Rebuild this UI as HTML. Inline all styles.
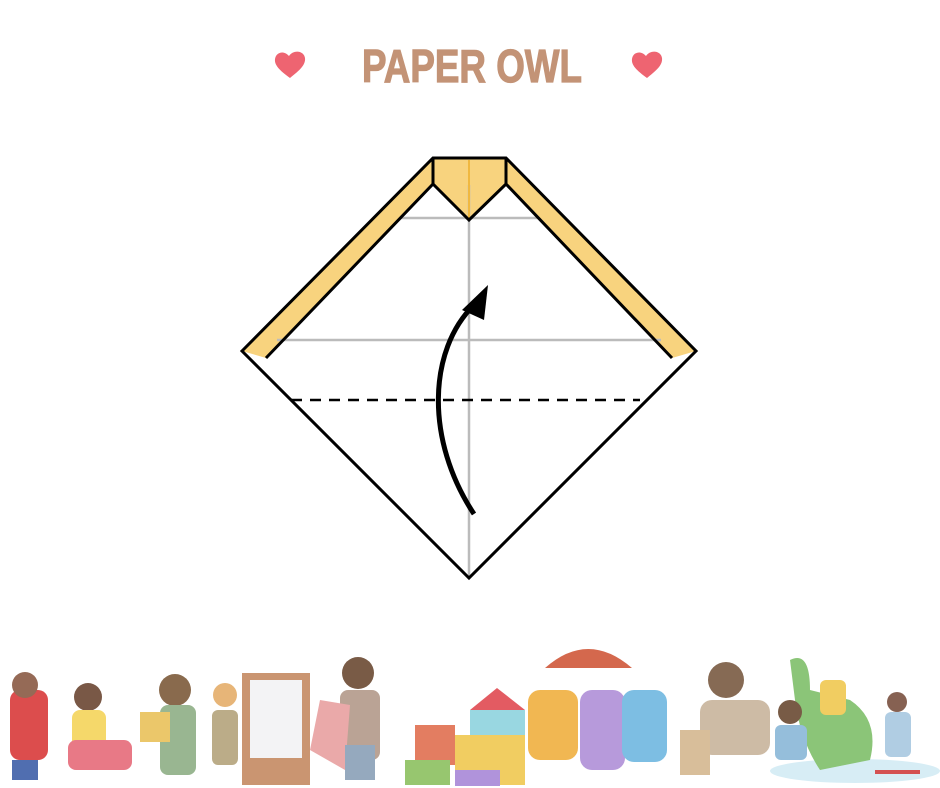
<!DOCTYPE html>
<html><head><meta charset="utf-8"><style>
html,body{margin:0;padding:0;background:#fff;width:940px;height:788px;overflow:hidden}
svg{display:block}
</style></head><body>
<svg width="940" height="788" viewBox="0 0 940 788" xmlns="http://www.w3.org/2000/svg">
<path d="M290 78 C282 72 274 66 275 59 C276 52 284 50 289 56 C294 49 304 51 305 58 C306 66 297 72 290 78Z" fill="#ee6471"/>
<path d="M647 78 C639 72 631 66 632 59 C633 52 641 50 646 56 C651 49 661 51 662 58 C663 66 654 72 647 78Z" fill="#ee6471"/>
<text x="362" y="82" textLength="220" lengthAdjust="spacingAndGlyphs" font-family="Liberation Sans, sans-serif" font-weight="bold" font-size="46" fill="#c39376" stroke="#c39376" stroke-width="1.2">PAPER OWL</text>

<polygon points="242,351 433,158 506,158 696,351 469,578" fill="#fff"/>
<polygon points="242,351 433,158 506,158 696,351 672,358 506,184 469,220 433,184 266,358" fill="#f8d37e"/>
<g stroke="#bbb" stroke-width="2.5" fill="none">
<line x1="469" y1="185" x2="469" y2="578"/>
<line x1="400" y1="218" x2="538" y2="218"/>
<line x1="277" y1="340" x2="661" y2="340"/>
</g>
<line x1="469" y1="160" x2="469" y2="218" stroke="#f0b840" stroke-width="2"/>
<g stroke="#000" stroke-width="3" fill="none" stroke-linejoin="miter">
<polyline points="266,358 433,184 469,220 506,184 672,358"/>
<line x1="433" y1="158" x2="433" y2="184"/>
<line x1="506" y1="158" x2="506" y2="184"/>
<polygon points="242,351 433,158 506,158 696,351 469,578"/>
<line x1="291" y1="400" x2="640" y2="400" stroke-dasharray="11,8" stroke-width="2.5"/>
<path d="M474 514 C 425 440 428 350 474 305" stroke-width="5"/>
</g>
<polygon points="462,310 488,285 484,320" fill="#000"/>

<g opacity="0.9">
<ellipse cx="855" cy="771" rx="85" ry="12" fill="#d3ecf5"/>
<rect x="10" y="690" width="38" height="70" rx="10" fill="#d93a3a"/>
<circle cx="25" cy="685" r="13" fill="#8a5a44"/>
<rect x="12" y="760" width="26" height="20" fill="#3e5fa8"/>
<circle cx="88" cy="697" r="14" fill="#6b4632"/>
<rect x="72" y="710" width="34" height="55" rx="8" fill="#f4d45a"/>
<rect x="68" y="740" width="64" height="30" rx="8" fill="#e66b7a"/>
<circle cx="175" cy="690" r="16" fill="#7d5a3a"/>
<rect x="160" y="705" width="36" height="70" rx="8" fill="#8faf86"/>
<rect x="140" y="712" width="30" height="30" fill="#e9c25a"/>
<circle cx="225" cy="695" r="12" fill="#e5ae6a"/>
<rect x="212" y="710" width="26" height="55" rx="6" fill="#b4a47c"/>
<rect x="242" y="673" width="68" height="112" fill="#c58a62"/>
<rect x="250" y="680" width="52" height="78" fill="#f2f2f4"/>
<circle cx="358" cy="673" r="16" fill="#6b4a33"/>
<rect x="340" y="690" width="40" height="70" rx="8" fill="#b39a8a"/>
<path d="M320 700 L350 705 L345 770 L310 750 Z" fill="#e8a0a0"/>
<rect x="345" y="745" width="30" height="35" fill="#8aa0b8"/>
<polygon points="470,710 497,688 525,710" fill="#e04a52"/>
<rect x="470" y="710" width="55" height="25" fill="#8fd3de"/>
<rect x="455" y="735" width="70" height="50" fill="#f0c850"/>
<rect x="415" y="725" width="40" height="40" fill="#e07050"/>
<rect x="405" y="760" width="45" height="25" fill="#8cc060"/>
<rect x="455" y="770" width="45" height="16" fill="#a888d8"/>
<path d="M545 668 Q588 630 632 668 Z" fill="#d0583a"/>
<rect x="528" y="690" width="50" height="70" rx="12" fill="#f0b040"/>
<rect x="580" y="690" width="45" height="80" rx="12" fill="#b090d8"/>
<rect x="622" y="690" width="45" height="72" rx="12" fill="#70b8e0"/>
<circle cx="726" cy="680" r="18" fill="#7a5a42"/>
<rect x="700" y="700" width="70" height="55" rx="12" fill="#c8b49c"/>
<rect x="680" y="730" width="30" height="45" fill="#d4b890"/>
<path d="M790 660 Q810 650 810 690 L850 700 Q880 720 870 760 L820 770 Q800 740 795 700 Z" fill="#7fbf6a"/>
<circle cx="790" cy="712" r="12" fill="#6a4a32"/>
<rect x="775" y="725" width="32" height="35" rx="6" fill="#8ab8d8"/>
<rect x="820" y="680" width="26" height="35" rx="6" fill="#f0c850"/>
<circle cx="897" cy="702" r="10" fill="#7a5040"/>
<rect x="885" y="712" width="26" height="45" rx="6" fill="#a8c8e0"/>
<rect x="875" y="770" width="45" height="4" fill="#d04040"/>
</g>
</svg>
</body></html>
